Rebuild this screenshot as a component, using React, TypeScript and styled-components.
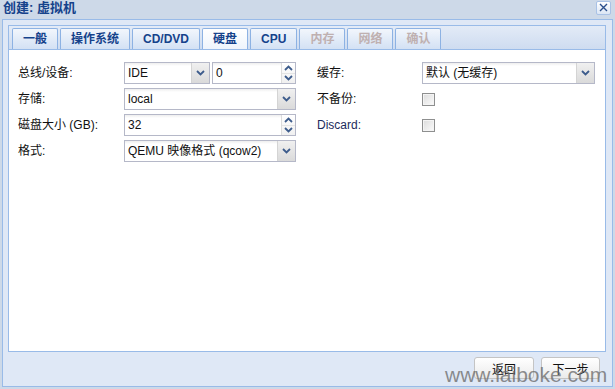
import styled, { createGlobalStyle } from "styled-components";

const GlobalStyle = createGlobalStyle`
  html, body {
    margin: 0;
    padding: 0;
    background: #cdd9e8;
  }
  body {
    font-family: "Liberation Sans", "Noto Sans CJK SC", sans-serif;
    font-size: 12px;
  }
`;

const Window = styled.div`
  position: relative;
  width: 615px;
  height: 389px;
  background: #cdd9e8;
  display: flex;
  flex-direction: column;
  overflow: hidden;
`;

const Header = styled.div`
  height: 19px;
  display: flex;
  align-items: center;
  justify-content: space-between;
  padding: 0 4px 0 3px;
`;

const Title = styled.span`
  font-size: 13px;
  line-height: 16px;
  font-weight: bold;
  color: #15428b;
  margin-top: -3px;
`;

const CloseTool = styled.button`
  width: 15px;
  height: 14px;
  padding: 0;
  margin-top: -4px;
  border: 1px solid #a9c2e6;
  border-radius: 2px;
  background: linear-gradient(#ffffff, #dbe6f5);
  display: flex;
  align-items: center;
  justify-content: center;
`;

const Frame = styled.div`
  flex: 1;
  margin: 0 2px 2px 2px;
  border: 1px solid #99bbe8;
  background: #dfe8f6;
  padding: 5px 6px 0 5px;
  display: flex;
  flex-direction: column;
`;

const TabPanel = styled.div`
  height: 327px;
  box-sizing: border-box;
  border: 1px solid #99bbe8;
  display: flex;
  flex-direction: column;
`;

const TabStrip = styled.div`
  height: 23px;
  box-sizing: border-box;
  padding: 2px 0 0 3px;
  display: flex;
  align-items: flex-end;
  gap: 2px;
  background: linear-gradient(#e3ebf7, #cedcf0);
  border-bottom: 1px solid #99bbe8;
  height: 24px;
`;

const Tab = styled.div<{ $active?: boolean; $disabled?: boolean }>`
  height: 21px;
  box-sizing: border-box;
  padding: 0 10px;
  border: 1px solid #8db2e3;
  border-bottom: none;
  border-radius: 2px 2px 0 0;
  background: ${(p) =>
    p.$active
      ? "linear-gradient(#ffffff, #eef4fc)"
      : "linear-gradient(#f2f6fc, #d3e1f4)"};
  color: ${(p) => (p.$disabled ? "#bfb0b0" : "#15428b")};
  font-weight: bold;
  font-size: 12px;
  line-height: 20px;
  white-space: nowrap;
`;

const PanelBody = styled.div`
  flex: 1;
  background: #ffffff;
  padding: 12px 9px;
  display: flex;
  gap: 21px;
`;

const Column = styled.div<{ $label: number; $field: number }>`
  display: grid;
  grid-template-columns: ${(p) => `${p.$label}px ${p.$field}px`};
  grid-auto-rows: 22px;
  row-gap: 4px;
  align-items: center;
  align-content: start;
`;

const Label = styled.label<{ $latin?: boolean }>`
  font-size: 12px;
  line-height: 14px;
  color: ${(p) => (p.$latin ? "#1c2b5c" : "#111")};
`;

const FieldRow = styled.div`
  display: flex;
  gap: 2px;
  height: 22px;
`;

const Field = styled.div<{ $width?: number }>`
  flex: ${(p) => (p.$width ? `0 0 ${p.$width}px` : "1")};
  height: 22px;
  box-sizing: border-box;
  border: 1px solid #b5b8c8;
  background: linear-gradient(#eeeeee 0, #ffffff 3px, #ffffff 100%);
  display: flex;
  align-items: stretch;
`;

const Value = styled.span`
  flex: 1;
  padding-left: 3px;
  font-size: 12px;
  line-height: 20px;
  color: #111;
  white-space: nowrap;
  overflow: hidden;
`;

const Trigger = styled.span`
  width: 17px;
  border-left: 1px solid #d4d4d4;
  background: linear-gradient(#f0f0f0, #dadada);
  display: flex;
  align-items: center;
  justify-content: center;
`;

const Spinner = styled.span`
  width: 13px;
  border-left: 1px solid #dcdcdc;
  display: flex;
  flex-direction: column;
  background: linear-gradient(#ffffff, #f0f0f0);
`;

const SpinHalf = styled.span`
  flex: 1;
  display: flex;
  align-items: center;
  justify-content: center;
  & + & {
    border-top: 1px solid #e4e4e4;
  }
`;

const Check = styled.span`
  width: 13px;
  height: 13px;
  box-sizing: border-box;
  border: 1px solid #8e8f8f;
  background: linear-gradient(135deg, #dcdcdc, #fbfbfb);
  box-shadow: inset 0 0 0 1px #f4f4f4;
`;

const Footer = styled.div`
  flex: 1;
  display: flex;
  justify-content: flex-end;
  align-items: flex-start;
  gap: 7px;
  padding: 5px 6px 0 0;
`;

const Button = styled.button<{ $width: number }>`
  width: ${(p) => p.$width}px;
  height: 22px;
  padding: 0;
  border: 1px solid #c4c4c4;
  border-radius: 3px;
  background: linear-gradient(#ffffff, #ebebeb);
  font-family: "Liberation Sans", "Noto Sans CJK SC", sans-serif;
  font-size: 12px;
  color: #111;
`;

const Watermark = styled.div`
  position: absolute;
  left: 445px;
  top: 364px;
  font-family: "Liberation Sans", sans-serif;
  font-size: 21px;
  line-height: 21px;
  color: rgba(105, 105, 105, 0.75);
  white-space: nowrap;
  pointer-events: none;
`;

const Chevron = ({ up }: { up?: boolean }) => (
  <svg width="9" height="6" viewBox="0 0 9 6">
    <path
      d={up ? "M1 5 L4.5 1.5 L8 5" : "M1 1 L4.5 4.5 L8 1"}
      fill="none"
      stroke="#3d5c8c"
      strokeWidth="1.8"
    />
  </svg>
);

const Combo = ({ value, width }: { value: string; width?: number }) => (
  <Field $width={width}>
    <Value>{value}</Value>
    <Trigger>
      <Chevron />
    </Trigger>
  </Field>
);

const NumberField = ({ value, width }: { value: string; width?: number }) => (
  <Field $width={width}>
    <Value>{value}</Value>
    <Spinner>
      <SpinHalf>
        <Chevron up />
      </SpinHalf>
      <SpinHalf>
        <Chevron />
      </SpinHalf>
    </Spinner>
  </Field>
);

const tabs = [
  { text: "一般" },
  { text: "操作系统" },
  { text: "CD/DVD" },
  { text: "硬盘", active: true },
  { text: "CPU" },
  { text: "内存", disabled: true },
  { text: "网络", disabled: true },
  { text: "确认", disabled: true },
];

export default function App() {
  return (
    <>
      <GlobalStyle />
      <Window>
        <Header>
          <Title>创建: 虚拟机</Title>
          <CloseTool aria-label="close">
            <svg width="9" height="9" viewBox="0 0 9 9">
              <path d="M1 1 L8 8 M8 1 L1 8" stroke="#2b4f8c" strokeWidth="1.4" />
            </svg>
          </CloseTool>
        </Header>
        <Frame>
          <TabPanel>
            <TabStrip>
              {tabs.map((t) => (
                <Tab key={t.text} $active={t.active} $disabled={t.disabled}>
                  {t.text}
                </Tab>
              ))}
            </TabStrip>
            <PanelBody>
              <Column $label={106} $field={172}>
                <Label>总线/设备:</Label>
                <FieldRow>
                  <Combo value="IDE" width={86} />
                  <NumberField value="0" />
                </FieldRow>
                <Label>存储:</Label>
                <Combo value="local" />
                <Label>磁盘大小 (GB):</Label>
                <NumberField value="32" />
                <Label>格式:</Label>
                <Combo value="QEMU 映像格式 (qcow2)" />
              </Column>
              <Column $label={105} $field={173}>
                <Label>缓存:</Label>
                <Combo value="默认 (无缓存)" />
                <Label>不备份:</Label>
                <Check />
                <Label $latin>Discard:</Label>
                <Check />
              </Column>
            </PanelBody>
          </TabPanel>
          <Footer>
            <Button $width={60}>返回</Button>
            <Button $width={59}>下一步</Button>
          </Footer>
        </Frame>
        <Watermark>www.laiboke.com</Watermark>
      </Window>
    </>
  );
}
